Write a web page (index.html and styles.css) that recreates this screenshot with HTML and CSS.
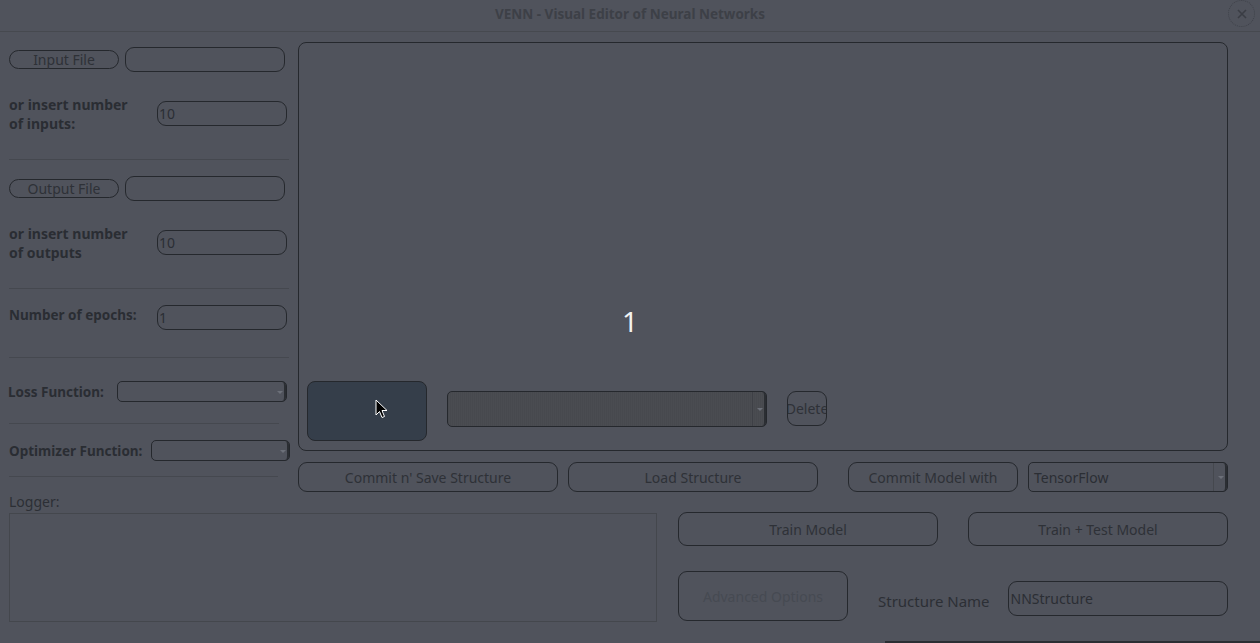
FILE: index.html
```html
<!DOCTYPE html>
<html>
<head>
<meta charset="utf-8">
<title>VENN</title>
<link rel="stylesheet" href="styles.css">
</head>
<body>
<div class="titlebar">
  <span></span>
  <div class="title">VENN - Visual Editor of Neural Networks</div>
  <div class="close">
    <svg width="12" height="12" viewBox="0 0 12 12"><path d="M2 2 L10 10 M10 2 L2 10" stroke="#3a3d44" stroke-width="1.6" fill="none"/></svg>
  </div>
</div>
<div class="app">
  <div class="top">
    <div class="left">
      <div class="row r-file first">
        <div class="btn pill file-btn">Input File</div>
        <div class="field file-field"></div>
      </div>
      <div class="row r-label">
        <div class="blabel w148 two">or insert number<br>of inputs:</div>
        <div class="field num-field">10</div>
      </div>
      <div class="sep s-a"></div>
      <div class="row r-file">
        <div class="btn pill file-btn">Output File</div>
        <div class="field file-field"></div>
      </div>
      <div class="row r-label">
        <div class="blabel w148 two">or insert number<br>of outputs</div>
        <div class="field num-field">10</div>
      </div>
      <div class="sep s-b"></div>
      <div class="row r-epoch">
        <div class="blabel w148 up">Number of epochs:</div>
        <div class="field num-field">1</div>
      </div>
      <div class="sep s-c"></div>
      <div class="row r-loss">
        <div class="blabel w109 down">Loss Function:</div>
        <div class="combo loss-combo"><span class="arrow"></span></div>
      </div>
      <div class="sep s-d"></div>
      <div class="row r-opt">
        <div class="blabel w142 down">Optimizer Function:</div>
        <div class="combo opt-combo"><span class="arrow"></span></div>
      </div>
      <div class="sep s-e"></div>
    </div>
    <div class="right">
      <div class="canvas">
        <div class="node-label">1</div>
        <div class="canvas-tools">
          <div class="layer-btn"></div>
          <div class="combo layer-combo"><span class="arrow"></span></div>
          <div class="btn delete-btn"><span>Delete</span></div>
        </div>
        <svg class="cursor" width="14" height="20" viewBox="0 0 14 20"><path d="M1 1 L1 16 L4.5 12.5 L7 18.5 L9.5 17.5 L7 11.5 L12 11.5 Z" fill="#000" stroke="#fff" stroke-width="1"/></svg>
      </div>
      <div class="actions">
        <div class="btn act commit-save">Commit n' Save Structure</div>
        <div class="btn act load">Load Structure</div>
        <div class="btn act commit-model">Commit Model with</div>
        <div class="combo tf-combo"><span class="combo-text">TensorFlow</span><span class="arrow"></span></div>
      </div>
    </div>
  </div>
  <div class="bottom">
    <div class="logger">
      <div class="logger-label">Logger:</div>
      <div class="logger-box"></div>
    </div>
    <div class="controls">
      <div class="train-row">
        <div class="btn train">Train Model</div>
        <div class="btn train">Train + Test Model</div>
      </div>
      <div class="name-row">
        <div class="btn advanced">Advanced Options</div>
        <div class="name-label">Structure Name</div>
        <div class="field name-field">NNStructure</div>
      </div>
    </div>
  </div>
  <div class="strip"></div>
</div>
</body>
</html>
```

FILE: styles.css
```css
* { box-sizing: border-box; }
html, body {
  margin: 0;
  padding: 0;
  width: 1260px;
  height: 643px;
  overflow: hidden;
  background: #50535c;
  font-family: "Noto Sans", "DejaVu Sans", sans-serif;
  color: #2c2f35;
}

.titlebar {
  height: 32px;
  display: grid;
  grid-template-columns: 1fr auto 1fr;
  align-items: center;
  border-bottom: 1px solid #46494f;
}
.title {
  font-size: 13.5px;
  font-weight: bold;
  color: #3d4047;
  padding-bottom: 3px;
}
.close {
  justify-self: end;
  margin-right: 5px;
  margin-bottom: 4px;
  width: 27px;
  height: 27px;
  border-radius: 50%;
  border: 1px dotted #3f424a;
  display: flex;
  align-items: center;
  justify-content: center;
}

.app { padding: 0 32px 0 9px; }

.top {
  display: flex;
  margin-top: 10px;
}
.left { width: 281px; }
.right {
  margin-left: 8px;
  width: 930px;
}

.row { display: flex; align-items: center; }
.r-file { height: 25px; margin-top: 16px; }
.r-file.first { margin-top: 5px; }
.r-label { height: 38px; margin-top: 22px; }
.r-epoch { height: 25px; margin-top: 16px; }
.r-loss { height: 21px; margin-top: 23px; }
.r-opt { height: 21px; margin-top: 16px; }

.sep { height: 1px; background: #45484f; }
.s-a { margin-top: 27px; width: 280px; }
.s-b { margin-top: 27px; width: 280px; }
.s-c { margin-top: 27px; width: 280px; }
.s-d { margin-top: 21px; width: 270px; }
.s-e { margin-top: 15px; width: 269px; }

.blabel {
  font-weight: bold;
  font-size: 13.5px;
  line-height: 19px;
  color: #2a2d33;
  white-space: nowrap;
}
.blabel.two { font-size: 14px; padding-top: 2px; }
.blabel.up { padding-bottom: 4px; }
.blabel.down { padding-top: 2px; }
.w148 { width: 148px; }
.w109 { width: 109px; margin-left: -1px; }
.w142 { width: 142px; }

.btn {
  border: 1px solid #25282d;
  display: flex;
  align-items: center;
  justify-content: center;
  font-size: 14px;
  color: #2e3137;
  white-space: nowrap;
}
.pill { border-radius: 10px; }
.file-btn { width: 110px; height: 19px; }

.field {
  border: 1px solid #25282d;
  border-radius: 9px;
  font-size: 14px;
  color: #2b2e34;
  display: flex;
  align-items: center;
}
.file-field { width: 160px; height: 25px; margin-left: 6px; }
.num-field { width: 130px; height: 25px; padding-left: 1px; }

.combo {
  position: relative;
  border: 1px solid #25282d;
  border-radius: 5px;
  display: flex;
  align-items: center;
}
.arrow {
  position: absolute;
  right: 0;
  top: 0;
  bottom: 0;
  width: 12px;
  border-right: 2px solid #2b2e33;
  border-radius: 0 4px 4px 0;
}
.arrow::after {
  content: "";
  position: absolute;
  left: 3px;
  top: 50%;
  margin-top: -1px;
  border-left: 3px solid transparent;
  border-right: 3px solid transparent;
  border-top: 3px solid #6c7079;
}
.loss-combo { width: 170px; height: 21px; }
.opt-combo { width: 140px; height: 21px; }

.canvas {
  position: relative;
  height: 409px;
  border: 1px solid #25282d;
  border-radius: 8px;
  display: flex;
  flex-direction: column;
  justify-content: flex-end;
}
.node-label {
  position: absolute;
  left: 323px;
  top: 258px;
  font-size: 28px;
  color: #f2f2f2;
  line-height: 40px;
}
.canvas-tools {
  display: flex;
  align-items: center;
  padding: 0 0 9px 8px;
}
.layer-btn {
  width: 120px;
  height: 60px;
  border: 1px solid #25282d;
  border-radius: 8px;
  background: #353e4a;
}
.layer-combo {
  margin-left: 20px;
  margin-top: -5px;
  width: 320px;
  height: 36px;
  background: repeating-linear-gradient(90deg, #47494e 0, #47494e 1px, #4a4c51 1px, #4a4c51 2px);
}
.layer-combo .arrow { width: 14px; border-left: 1px solid #3e4046; }
.layer-combo .arrow::after { left: 4px; }
.delete-btn {
  margin-left: 20px;
  margin-top: -5px;
  width: 40px;
  height: 35px;
  border-radius: 9px;
  overflow: hidden;
  justify-content: center;
}
.delete-btn span { flex: none; }
.cursor {
  position: absolute;
  left: 76px;
  top: 356px;
}

.actions {
  display: flex;
  margin-top: 11px;
  height: 30px;
}
.act { height: 30px; border-radius: 9px; }
.commit-save { width: 260px; }
.load { width: 250px; margin-left: 10px; }
.commit-model { width: 170px; margin-left: 30px; }
.tf-combo { width: 200px; height: 30px; margin-left: 10px; font-size: 14px; color: #2b2e34; }
.combo-text { padding-left: 5px; }
.tf-combo .arrow { width: 14px; border-left: 1px solid #45484e; }
.tf-combo .arrow::after { left: 4px; }

.bottom {
  display: flex;
  margin-top: 1px;
}
.logger { width: 649px; }
.logger-label {
  height: 20px;
  font-size: 14px;
  line-height: 18px;
  color: #2c2f35;
}
.logger-box {
  height: 109px;
  border: 1px solid #44474d;
}
.controls {
  margin-left: 21px;
  width: 550px;
  padding-top: 19px;
}
.train-row { display: flex; gap: 30px; }
.train { width: 260px; height: 34px; border-radius: 9px; }
.name-row { display: flex; align-items: flex-start; margin-top: 25px; }
.advanced {
  width: 170px;
  height: 50px;
  border-radius: 9px;
  color: #464a52;
}
.name-label {
  margin-left: 30px;
  margin-top: 20px;
  font-size: 15px;
  color: #2c2f35;
}
.name-field {
  margin-left: 18px;
  margin-top: 10px;
  width: 220px;
  height: 35px;
  padding-left: 2px;
}

.strip {
  margin-top: 19px;
  margin-left: 876px;
  margin-right: -32px;
  height: 3px;
  background: #2b2e33;
}
```
